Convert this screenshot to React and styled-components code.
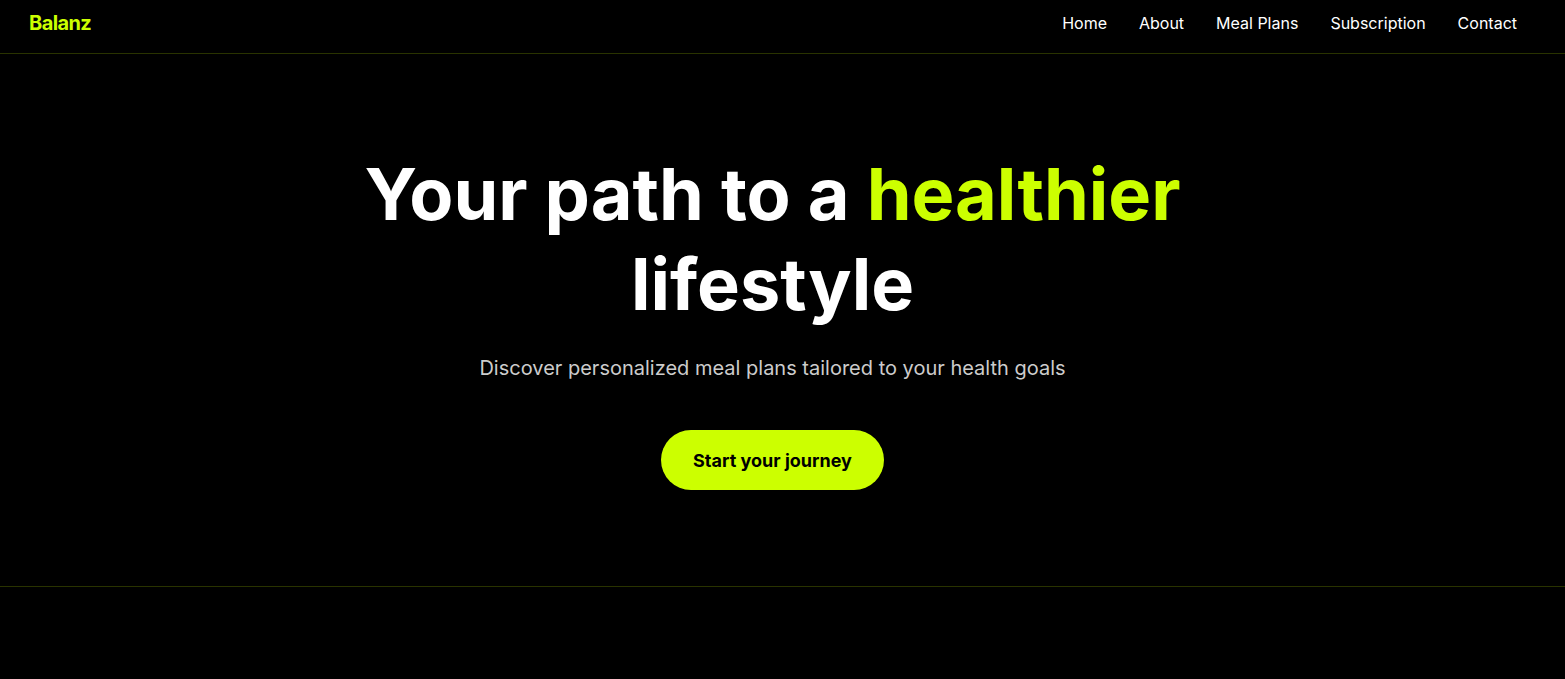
import React from "react";
import styled, { createGlobalStyle } from "styled-components";

const GlobalStyle = createGlobalStyle`
  * { box-sizing: border-box; }
  html, body { margin: 0; padding: 0; background: #000; }
  body {
    font-family: Inter, "Noto Sans", "Liberation Sans", sans-serif;
    color: #fff;
    min-height: 100vh;
  }
`;

const Page = styled.div`
  min-height: 100vh;
  background: #000;
`;

const Header = styled.header`
  height: 54px;
  display: flex;
  align-items: center;
  justify-content: space-between;
  padding: 0 48px 8px 29px;
  border-bottom: 1px solid rgba(204, 255, 0, 0.2);
`;

const Logo = styled.a`
  font-size: 20px;
  font-weight: 700;
  color: #ccff00;
  text-decoration: none;
  letter-spacing: -0.6px;
`;

const Nav = styled.nav`
  display: flex;
  gap: 32px;
`;

const NavLink = styled.a`
  font-size: 16px;
  color: #fff;
  text-decoration: none;
`;

const Hero = styled.section`
  padding: 95px 20px 96px 0;
  display: flex;
  flex-direction: column;
  align-items: center;
  text-align: center;
  border-bottom: 1px solid rgba(204, 255, 0, 0.2);
`;

const Title = styled.h1`
  margin: 0;
  max-width: 900px;
  font-size: 72px;
  line-height: 90px;
  font-weight: 700;
  letter-spacing: 0;
  color: #fff;
`;

const Accent = styled.span`
  color: #ccff00;
`;

const Subtitle = styled.p`
  margin: 24px 0 0;
  font-size: 20px;
  line-height: 30px;
  color: #cccccc;
`;

const CTA = styled.button`
  margin-top: 47px;
  height: 60px;
  padding: 0 32px;
  border: none;
  border-radius: 999px;
  background: #ccff00;
  color: #000;
  font-family: inherit;
  font-size: 18px;
  font-weight: 700;
  cursor: pointer;
`;

export default function App() {
  const links = ["Home", "About", "Meal Plans", "Subscription", "Contact"];
  return (
    <Page>
      <GlobalStyle />
      <Header>
        <Logo href="#">Balanz</Logo>
        <Nav>
          {links.map((l) => (
            <NavLink key={l} href="#">
              {l}
            </NavLink>
          ))}
        </Nav>
      </Header>
      <Hero>
        <Title>
          Your path to a <Accent>healthier</Accent> lifestyle
        </Title>
        <Subtitle>Discover personalized meal plans tailored to your health goals</Subtitle>
        <CTA>Start your journey</CTA>
      </Hero>
    </Page>
  );
}
